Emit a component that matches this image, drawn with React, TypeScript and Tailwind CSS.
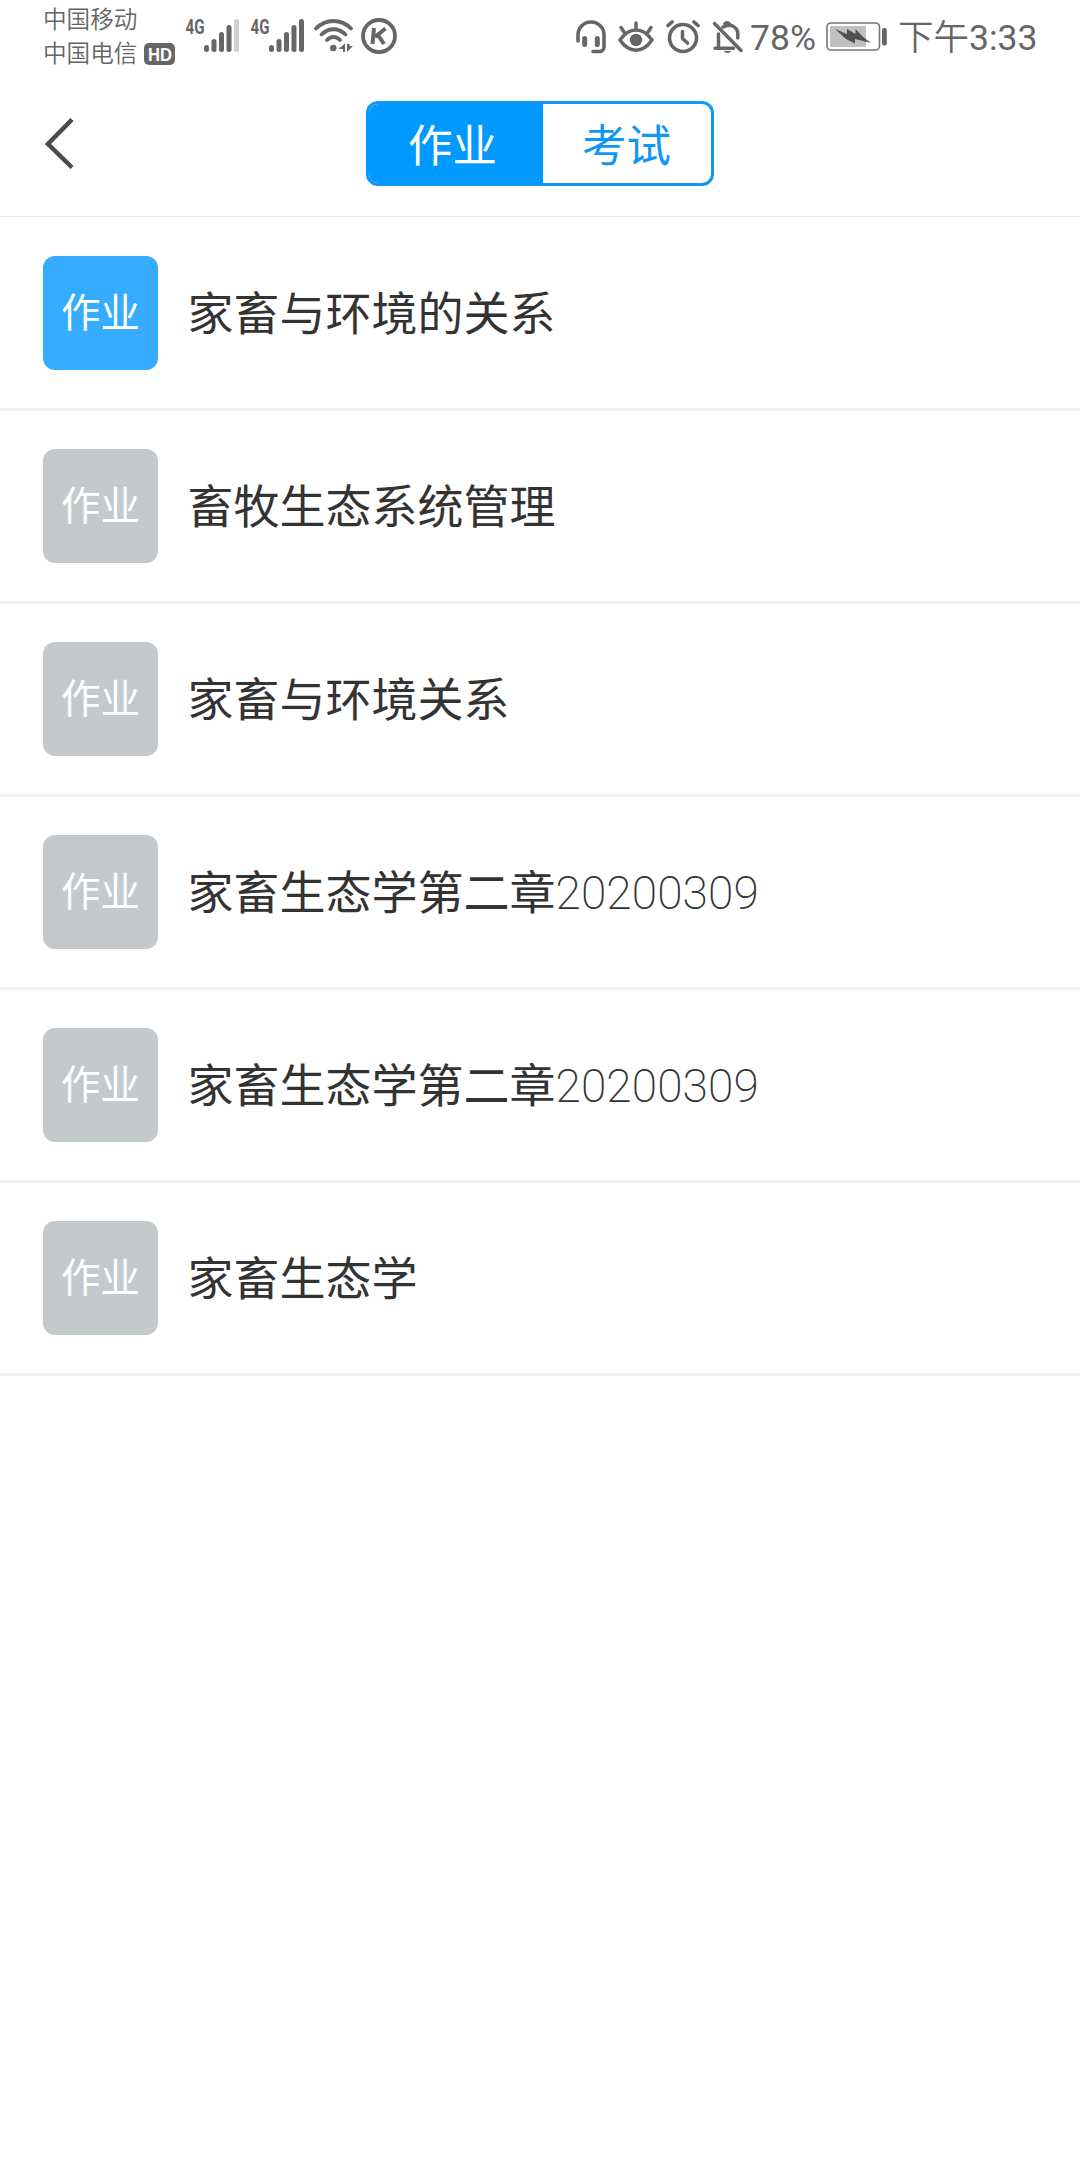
import React from 'react'

const homeworks = [
    { id: 1, title: '家畜与环境的关系', date: '', active: true },
    { id: 2, title: '畜牧生态系统管理', date: '', active: false },
    { id: 3, title: '家畜与环境关系', date: '', active: false },
    { id: 4, title: '家畜生态学第二章', date: '20200309', active: false },
    { id: 5, title: '家畜生态学第二章', date: '20200309', active: false },
    { id: 6, title: '家畜生态学', date: '', active: false },
]

// bar tops from the shortest to the tallest
const bars = [26, 20, 13, 6, 0]

const Signal = ({ level }: { level: number }) => (
    <svg className="-mt-[5px] overflow-visible" width="54" height="39" viewBox="0 -5 54 39" fill="#666">
        <text x="-.5" y="15" fontSize="21" fontWeight="700" fontFamily="Roboto, sans-serif" textLength="19" lengthAdjust="spacingAndGlyphs">4G</text>
        {bars.map((top, i) => (
            <rect key={top} x={18 + i * 7.5} y={top} width="5" height={33 - top} rx="2.5" fill={i < level ? '#666' : '#d0d0d0'} />
        ))}
    </svg>
)

const Wifi = () => (
    <svg width="40" height="34" viewBox="0 0 40 34" fill="none" stroke="#666" strokeWidth="3.8" strokeLinecap="round">
        <path d="M2 9.5C12 -.5 27 -.5 37 9.5" />
        <path d="M7.5 15.5C14.5 8.5 24.5 8.5 31.5 15.5" />
        <path d="M13 21C17 17 22 17 26 21" />
        <circle cx="19.3" cy="29" r="3.3" fill="#666" stroke="none" />
        <path d="M31 24.5v8.500h-2v-3h-4.500zM33 25v8l6-6h-3.500v-2z" fill="#666" stroke="none" />
    </svg>
)

const KBadge = () => (
    <svg width="36" height="36" viewBox="0 0 36 36" fill="none" stroke="#666" strokeWidth="3.8">
        <circle cx="18" cy="18" r="16" />
        <path d="M13 10L11.5 26M24.5 10.5L14 19M17 17l6 9" strokeWidth="4" />
    </svg>
)

const Headset = () => (
    <svg width="30" height="34" viewBox="0 0 30 34" fill="none" stroke="#666" strokeWidth="3.6" strokeLinecap="round">
        <path d="M2 21V15a13 13 0 0 1 26 0V27a4.5 4.5 0 0 1-4.5 4.5H17" />
        <path d="M8.7 18.5v6M21.3 18.5v6" strokeWidth="5" />
    </svg>
)

const Eye = () => (
    <svg width="36" height="34" viewBox="0 0 36 34" fill="none" stroke="#666" strokeWidth="3.5" strokeLinecap="round">
        <path d="M2 20C11 6.5 25 6.5 34 20C25 33.5 11 33.5 2 20z" strokeLinejoin="round" />
        <circle cx="18" cy="20" r="6.2" fill="#666" stroke="none" />
        <path d="M18 3v6M3 7.5l3 4.5M33 7.5l-3 4.5" />
    </svg>
)

const Alarm = () => (
    <svg width="34" height="34" viewBox="0 0 34 34" fill="none" stroke="#666" strokeWidth="3.6" strokeLinecap="round">
        <circle cx="17" cy="18" r="13.5" />
        <path d="M2 5.5L6 2M28 2l4 3.5" />
        <path d="M16.5 11.5v7l5 4.5" strokeLinejoin="round" />
    </svg>
)

const BellOff = () => (
    <svg width="32" height="34" viewBox="0 0 32 34" fill="none" stroke="#666" strokeWidth="3.5" strokeLinecap="round">
        <path d="M2.5 3.5L29 30.5" />
        <path d="M6.5 14v12.5M3 28.2h18.5M11 7C18 2.5 25.8 7 25.8 14v4" />
        <path d="M12.8 3.5a3 3 0 0 1 4.5 0" strokeWidth="3" />
        <path d="M11.5 31h8q-4 4-8 0z" fill="#666" stroke="none" />
    </svg>
)

const Battery = () => (
    <svg width="62" height="30" viewBox="0 0 62 30">
        <rect x="1" y="1" width="52.5" height="27" rx="4" fill="none" stroke="#777" strokeWidth="1.6" />
        <rect x="4" y="4" width="36" height="21" rx="1" fill="#c0c0c0" />
        <path d="M9 7l12 5V7l8.5 5V7l7.5 8 8 6-16-4v4.5L20 17z" fill="#505050" />
        <rect x="56" y="6" width="4.8" height="17.5" rx="2" fill="#666" />
    </svg>
)

const StatusBar = () => (
    <div className="flex h-[75px] items-start pl-[43px] pr-[42px] text-[#666]">
        <div className="flex w-[143px] flex-col pt-1 text-[23.6px] font-[350] leading-[33.5px]">
            <span>中国移动</span>
            <div className="flex items-center">
                <span>中国电信</span>
                <svg className="ml-[7px] overflow-visible" width="31" height="22" viewBox="0 0 31 22">
                    <rect width="31" height="22" rx="5" fill="#666" />
                    <text x="4" y="17.5" fontSize="19" fontWeight="600" fontFamily="Liberation Sans, sans-serif" fill="#fff" textLength="24" lengthAdjust="spacingAndGlyphs">HD</text>
                </svg>
            </div>
        </div>
        <div className="flex pt-[19px]">
            <Signal level={4} />
            <div className="ml-[11px]"><Signal level={5} /></div>
            <div className="ml-[9px]"><Wifi /></div>
            <div className="-mt-px ml-[7px]"><KBadge /></div>
        </div>
        <div className="ml-auto flex pt-5">
            <Headset />
            <div className="ml-3"><Eye /></div>
            <div className="ml-3"><Alarm /></div>
            <div className="ml-3"><BellOff /></div>
            <span className="ml-1.5 w-[69px] whitespace-nowrap text-[35.5px] leading-[36px]">78%</span>
            <div className="ml-[7px] mt-0.5"><Battery /></div>
            <span className="ml-2.5 w-[140px] whitespace-nowrap text-[35.5px] font-[350] leading-[36px]">
                下午<span className="font-normal">3:33</span>
            </span>
        </div>
    </div>
)

const Header = () => (
    <header className="flex h-[142px] items-start border-b border-[#ececec] pl-[44px] pt-[26px]">
        <button type="button" aria-label="返回" className="mt-4">
            <svg width="30" height="54" viewBox="0 0 30 54" fill="none" stroke="#4a4b4d" strokeWidth="4.5">
                <path d="M28 2.5L4 27L28 50.5" />
            </svg>
        </button>
        <div className="ml-[292px] flex h-[85px] w-[348px] overflow-hidden rounded-xl border-[3px] border-[#0f97f5] border-l-[#0099ff] bg-white text-[44.5px] leading-none">
            <button type="button" className="w-[174px] bg-[#0099ff] pr-[7px] pt-2 text-white">作业</button>
            <button type="button" className="grow pr-px pt-2 text-[#0f97f5]">考试</button>
        </div>
    </header>
)

const App = () => {
    return (
        <main className="min-h-[2160px] w-[1080px] bg-white font-['Roboto','Noto_Sans_CJK_SC',sans-serif]">
            <StatusBar />
            <Header />
            <ul className="pt-px">
                {homeworks.map((item) => (
                    <li key={item.id} className="flex h-[193px] items-center border-b-[3px] border-[#f1f1f1] pl-[43px]">
                        <div className={`flex h-[114px] w-[115px] items-center justify-center rounded-xl pt-0.5 text-[39.5px] text-white ${item.active ? 'bg-[#35acff]' : 'bg-[#c4c9cc]'}`}>
                            作业
                        </div>
                        <h2 className="ml-[29.5px] pt-0.5 text-[46px] text-[#333]">
                            {item.title}
                            <span className="font-extralight tracking-[0.1px]">{item.date}</span>
                        </h2>
                    </li>
                ))}
            </ul>
        </main>
    )
}

export default App
